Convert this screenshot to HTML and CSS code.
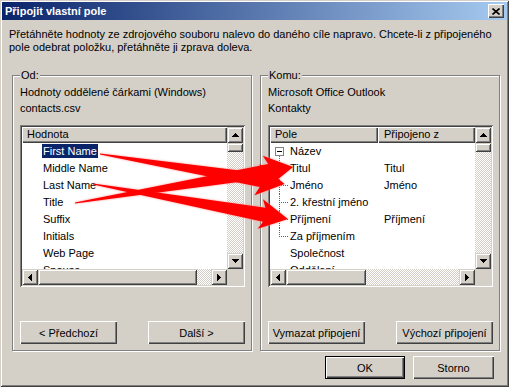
FILE: index.html
```html
<!DOCTYPE html>
<html lang="cs">
<head>
  <meta charset="UTF-8" />
  <title>Připojit vlastní pole</title>
  <link rel="stylesheet" href="styles.css">
</head>
<body>

  <div class="window">
    <div class="titlebar">
      <span class="title">Připojit vlastní pole</span>
      <span class="close-btn">
        <svg width="8" height="7" viewBox="0 0 8 7"><path d="M0.5 0.5 L7.5 6.5 M7.5 0.5 L0.5 6.5" stroke="#000" stroke-width="1.6" fill="none"/></svg>
      </span>
    </div>

    <p class="intro">Přetáhněte hodnoty ze zdrojového souboru nalevo do daného cíle napravo. Chcete-li z připojeného<br>pole odebrat položku, přetáhněte ji zprava doleva.</p>

    <div class="groups">
      <fieldset class="group">
        <legend>Od:</legend>
        <div class="label">Hodnoty oddělené čárkami (Windows)</div>
        <div class="label">contacts.csv</div>
        <div class="listbox">
          <div class="list-view">
            <div class="list-head"><div class="col">Hodnota</div></div>
            <div class="rows">
              <div class="row plain"><span class="sel">First Name</span></div>
              <div class="row plain"><span>Middle Name</span></div>
              <div class="row plain"><span>Last Name</span></div>
              <div class="row plain"><span>Title</span></div>
              <div class="row plain"><span>Suffix</span></div>
              <div class="row plain"><span>Initials</span></div>
              <div class="row plain"><span>Web Page</span></div>
              <div class="row plain"><span>Spouse</span></div>
            </div>
          </div>
          <div class="vscroll">
            <div class="sbtn"><svg width="7" height="4"><path d="M3 0h1v1h1v1h1v1h1v1H0V3h1V2h1V1h1z" fill="#000"/></svg></div>
            <div class="thumb"></div>
            <div class="track"></div>
            <div class="sbtn"><svg width="7" height="4"><path d="M0 0h7v1H6v1H5v1H4v1H3V3H2V2H1V1H0z" fill="#000"/></svg></div>
          </div>
          <div class="hscroll">
            <div class="sbtn"><svg width="4" height="7"><path d="M3 0h1v7H3V6H2V5H1V4H0V3h1V2h1V1h1z" fill="#000"/></svg></div>
            <div class="thumb wide-left"></div>
            <div class="track"></div>
            <div class="sbtn"><svg width="4" height="7"><path d="M0 0h1v1h1v1h1v1h1v1H3v1H2v1H1v1H0z" fill="#000"/></svg></div>
          </div>
          <div class="corner"></div>
        </div>
        <div class="group-buttons">
          <button class="btn">&lt; Předchozí</button>
          <button class="btn">Další &gt;</button>
        </div>
      </fieldset>

      <fieldset class="group">
        <legend>Komu:</legend>
        <div class="label">Microsoft Office Outlook</div>
        <div class="label">Kontakty</div>
        <div class="listbox">
          <div class="list-view">
            <div class="list-head two">
              <div class="col">Pole</div>
              <div class="col">Připojeno z</div>
            </div>
            <div class="rows">
              <div class="row tree"><span class="cell"><span class="node minus"><svg width="9" height="9"><rect x="0.5" y="0.5" width="8" height="8" fill="#fff" stroke="#808080"/><path d="M2 4.5h5" stroke="#000"/></svg></span>Název</span><span class="cell"></span></div>
              <div class="row tree"><span class="cell"><span class="node branch"></span>Titul</span><span class="cell">Titul</span></div>
              <div class="row tree"><span class="cell"><span class="node branch"></span>Jméno</span><span class="cell">Jméno</span></div>
              <div class="row tree"><span class="cell"><span class="node branch"></span>2. křestní jméno</span><span class="cell"></span></div>
              <div class="row tree"><span class="cell"><span class="node branch"></span>Příjmení</span><span class="cell">Příjmení</span></div>
              <div class="row tree"><span class="cell"><span class="node branch last"></span>Za příjmením</span><span class="cell"></span></div>
              <div class="row tree"><span class="cell"><span class="node"></span>Společnost</span><span class="cell"></span></div>
              <div class="row tree"><span class="cell"><span class="node"></span>Oddělení</span><span class="cell"></span></div>
            </div>
          </div>
          <div class="vscroll">
            <div class="sbtn"><svg width="7" height="4"><path d="M3 0h1v1h1v1h1v1h1v1H0V3h1V2h1V1h1z" fill="#000"/></svg></div>
            <div class="thumb"></div>
            <div class="track"></div>
            <div class="sbtn"><svg width="7" height="4"><path d="M0 0h7v1H6v1H5v1H4v1H3V3H2V2H1V1H0z" fill="#000"/></svg></div>
          </div>
          <div class="hscroll">
            <div class="sbtn"><svg width="4" height="7"><path d="M3 0h1v7H3V6H2V5H1V4H0V3h1V2h1V1h1z" fill="#000"/></svg></div>
            <div class="thumb wide-right"></div>
            <div class="track"></div>
            <div class="sbtn"><svg width="4" height="7"><path d="M0 0h1v1h1v1h1v1h1v1H3v1H2v1H1v1H0z" fill="#000"/></svg></div>
          </div>
          <div class="corner"></div>
        </div>
        <div class="group-buttons">
          <button class="btn">Vymazat připojení</button>
          <button class="btn">Výchozí připojení</button>
        </div>
      </fieldset>
    </div>

    <div class="dialog-buttons">
      <button class="btn default">OK</button>
      <button class="btn">Storno</button>
    </div>

    <!-- drag arrows drawn on top of the dialog -->
    <svg class="arrows" width="509" height="387" viewBox="0 0 509 387">
      <g fill="#f00">
        <polygon transform="translate(75 203) rotate(-9.38)" points="0,-0.6 197,-7 193,-16 221,0 193,16 197,7 0,0.6"/>
        <polygon transform="translate(100 154) rotate(9.21)" points="0,-0.6 163,-7 159,-16 187,0 159,16 163,7 0,0.6"/>
        <polygon transform="translate(93 184) rotate(10.18)" points="0,-0.6 174,-7 170,-15 198,0 170,15 174,7 0,0.6"/>
      </g>
    </svg>
  </div>

</body>
</html>
```

FILE: styles.css
```css
body {
  margin: 0;
  background: #d4d0c8;
  font-family: "Liberation Sans", Arial, sans-serif;
  font-size: 11px;
  color: #000;
  overflow: hidden;
}

.window {
  position: relative;
  width: 509px;
  height: 387px;
  box-sizing: border-box;
  padding: 2px;
  display: flex;
  flex-direction: column;
  background: #d4d0c8;
  box-shadow: inset 1px 1px #d4d0c8, inset -1px -1px #404040, inset 2px 2px #fff, inset -2px -2px #808080;
}

.titlebar {
  height: 18px;
  display: flex;
  align-items: center;
  justify-content: space-between;
  padding: 0 3px;
  background: linear-gradient(to right, #0a246a, #a6caf0);
}
.title {
  color: #fff;
  font-weight: bold;
  font-size: 11px;
}
.close-btn {
  width: 16px;
  height: 14px;
  display: flex;
  align-items: center;
  justify-content: center;
  background: #d4d0c8;
  box-shadow: inset 1px 1px #fff, inset -1px -1px #404040, inset -2px -2px #808080;
}

.intro {
  margin: 8px 0 0 7px;
  line-height: 13px;
  white-space: nowrap;
}

.groups {
  display: flex;
  gap: 8px;
  margin: 14px 0 0 10px;
}
.group {
  width: 240px;
  box-sizing: border-box;
  margin: 0;
  padding: 2px 6px 6px 7px;
  border: 1px solid #808080;
  box-shadow: 1px 1px 0 #fff, inset 1px 1px 0 #fff;
  display: flex;
  flex-direction: column;
}
.group legend {
  padding: 0 1px;
  line-height: 14px;
  background: #d4d0c8;
}
.label {
  line-height: 16px;
  white-space: nowrap;
}

.listbox {
  margin-top: 9px;
  height: 162px;
  box-sizing: border-box;
  padding: 2px;
  background: #fff;
  box-shadow: inset 1px 1px #808080, inset -1px -1px #fff, inset 2px 2px #404040, inset -2px -2px #d4d0c8;
  display: grid;
  grid-template-columns: 1fr 16px;
  grid-template-rows: 1fr 16px;
}
.list-view {
  overflow: hidden;
  min-width: 0;
}
.list-head {
  display: flex;
  height: 16px;
}
.list-head .col {
  flex: 1;
  padding-left: 5px;
  line-height: 15px;
  background: #d4d0c8;
  box-shadow: inset 1px 1px #fff, inset -1px -1px #404040, inset -2px -2px #808080;
  white-space: nowrap;
}
.list-head.two .col:first-child {
  flex: 0 0 108px;
  box-sizing: border-box;
}
.list-head.two .col:last-child {
  padding-left: 6px;
}

.row {
  height: 17px;
  line-height: 17px;
  white-space: nowrap;
}
.row.plain {
  padding-left: 20px;
}
.row.plain span {
  padding: 1px 1px;
}
.row .sel {
  background: #0a246a;
  color: #fff;
}
.row.tree {
  display: grid;
  grid-template-columns: 108px 1fr;
}
.row.tree .cell {
  display: flex;
  align-items: center;
}
.row.tree .cell:first-child {
  padding-left: 5px;
}
.row.tree .cell:last-child {
  padding-left: 6px;
}
.node {
  width: 15px;
  height: 17px;
  flex: none;
  display: flex;
  align-items: center;
}
.node.minus {
  background: repeating-linear-gradient(to bottom, #606060 0 1px, transparent 1px 2px) 4px 13px / 1px 4px no-repeat;
}
.node.branch {
  background:
    repeating-linear-gradient(to bottom, #606060 0 1px, transparent 1px 2px) 4px 0 / 1px 100% no-repeat,
    repeating-linear-gradient(to right, #606060 0 1px, transparent 1px 2px) 4px 8px / 10px 1px no-repeat;
}
.node.branch.last {
  background:
    repeating-linear-gradient(to bottom, #606060 0 1px, transparent 1px 2px) 4px 0 / 1px 9px no-repeat,
    repeating-linear-gradient(to right, #606060 0 1px, transparent 1px 2px) 4px 8px / 10px 1px no-repeat;
}

.vscroll {
  display: flex;
  flex-direction: column;
}
.hscroll {
  display: flex;
}
.sbtn {
  width: 16px;
  height: 16px;
  flex: none;
  display: flex;
  align-items: center;
  justify-content: center;
  background: #d4d0c8;
  box-shadow: inset 1px 1px #d4d0c8, inset -1px -1px #404040, inset 2px 2px #fff, inset -2px -2px #808080;
}
.thumb {
  flex: none;
  height: 9px;
  background: #d4d0c8;
  box-shadow: inset 1px 1px #d4d0c8, inset -1px -1px #404040, inset 2px 2px #fff, inset -2px -2px #808080;
}
.hscroll .thumb {
  height: auto;
}
.thumb.wide-left {
  width: 159px;
}
.thumb.wide-right {
  width: 80px;
}
.track {
  flex: 1;
  background: repeating-conic-gradient(#fff 0 25%, #d4d0c8 0 50%) 0 0 / 2px 2px;
}
.corner {
  background: #d4d0c8;
}

.group-buttons {
  display: flex;
  justify-content: space-between;
  margin-top: 34px;
}
.btn {
  width: 97px;
  height: 23px;
  padding: 0;
  border: none;
  font: inherit;
  color: #000;
  background: #d4d0c8;
  box-shadow: inset 1px 1px #fff, inset -1px -1px #404040, inset -2px -2px #808080;
}

.dialog-buttons {
  display: flex;
  justify-content: flex-end;
  gap: 8px;
  margin-top: 5px;
  padding-right: 13px;
}
.dialog-buttons .btn {
  width: 81px;
}
.btn.default {
  width: 80px;
  box-shadow: inset 0 0 0 1px #000, inset 2px 2px #fff, inset -2px -2px #404040, inset -3px -3px #808080;
}

.arrows {
  position: absolute;
  top: 0;
  left: 0;
  pointer-events: none;
  filter: drop-shadow(0 0 1px #ff9090);
}
```
